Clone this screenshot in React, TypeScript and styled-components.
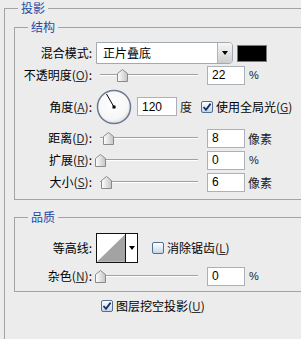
import styled, { createGlobalStyle } from "styled-components";

const GlobalStyle = createGlobalStyle`
  html, body {
    margin: 0;
    padding: 0;
    overflow: hidden;
    background: #ececec;
  }
  body {
    font-family: "Noto Sans CJK SC", "Noto Sans", sans-serif;
    font-size: 12px;
    color: #000;
  }
`;

const Panel = styled.fieldset`
  margin: 1px 0 0 4px;
  padding: 5px 0 0 9px;
  border: 1px solid #a3a3a3;
  border-right: none;
  border-bottom: none;
  min-width: 0;
  box-sizing: border-box;
  height: 338px;
`;

const Section = styled.fieldset<{ $top?: number; $pad: string }>`
  margin: ${(p) => p.$top ?? 0}px 0 0 0;
  padding: ${(p) => p.$pad};
  border: 1px solid #a3a3a3;
  border-right: none;
  min-width: 0;
`;

const Title = styled.legend<{ $indent: number }>`
  margin-left: ${(p) => p.$indent}px;
  padding: 0 3px;
  line-height: 14px;
  color: #1c4aa6;
`;

const Row = styled.div<{ $h: number; $top?: number }>`
  display: flex;
  align-items: center;
  height: ${(p) => p.$h}px;
  margin-top: ${(p) => p.$top ?? 0}px;
  white-space: nowrap;
`;

const Label = styled.span`
  flex: none;
  width: 77px;
  margin-right: 4px;
  text-align: right;
  line-height: 14px;
`;

const Key = styled.span`
  color: #333;
  text-decoration: underline;
`;

const Select = styled.div`
  display: flex;
  width: 137px;
  height: 22px;
  box-sizing: border-box;
  border: 1px solid #a2a9b1;
  border-radius: 0 4px 4px 0;
  background: #fff;
`;

const SelectText = styled.span`
  flex: 1;
  padding-left: 6px;
  line-height: 20px;
`;

const SelectButton = styled.span`
  display: flex;
  align-items: center;
  justify-content: center;
  width: 14px;
  border-left: 1px solid #b4b4b4;
  border-radius: 0 3px 3px 0;
  background: linear-gradient(#f7f7f7, #cdcdcd);
`;

const Arrow = styled.span`
  width: 0;
  height: 0;
  border-left: 3px solid transparent;
  border-right: 3px solid transparent;
  border-top: 4px solid #000;
`;

const Swatch = styled.span`
  width: 30px;
  height: 17px;
  margin-left: 4px;
  box-sizing: border-box;
  border: 1px solid #7a7a7a;
  background: #000;
`;

const SliderBox = styled.div`
  position: relative;
  flex: none;
  width: 104px;
  height: 20px;
  &::before {
    content: "";
    position: absolute;
    left: 4px;
    right: 2px;
    top: 9px;
    height: 0;
    border-top: 1px solid #a0a0a0;
    border-bottom: 1px solid #fff;
  }
`;

const Thumb = styled.svg`
  position: absolute;
  top: 4px;
`;

const NumInput = styled.input<{ $w?: number; $gap?: number }>`
  flex: none;
  width: ${(p) => p.$w ?? 38}px;
  height: 19px;
  margin: 0 0 0 ${(p) => p.$gap ?? 7}px;
  padding: 0 0 0 4px;
  box-sizing: border-box;
  border: 1px solid #abb1b9;
  background: #fff;
  font-family: "Liberation Sans", Arial, sans-serif;
  font-size: 12px;
  color: #000;
  outline: none;
`;

const Unit = styled.span<{ $small?: boolean }>`
  margin-left: ${(p) => (p.$small ? 4 : 3)}px;
  font-family: ${(p) =>
    p.$small ? `"Liberation Sans", Arial, sans-serif` : "inherit"};
  font-size: ${(p) => (p.$small ? 11 : 12)}px;
  color: #222;
`;

const Box = styled.span<{ $gap?: number }>`
  display: flex;
  align-items: center;
  justify-content: center;
  flex: none;
  width: 12px;
  height: 12px;
  margin-left: ${(p) => p.$gap ?? 0}px;
  box-sizing: border-box;
  border: 1px solid #4f6f93;
  border-radius: 2px;
  background: linear-gradient(#ffffff, #c6d6e8);
`;

const BoxText = styled.span`
  margin-left: 3px;
  line-height: 14px;
`;

const Contour = styled.div`
  display: flex;
  width: 42px;
  height: 30px;
  box-sizing: border-box;
  border: 1px solid #111;
  background: #fff;
`;

const ContourArrow = styled.span`
  display: flex;
  align-items: center;
  justify-content: center;
  width: 11px;
  border-left: 1px solid #111;
`;

function Slider({ pos }: { pos: number }) {
  return (
    <SliderBox>
      <Thumb width="11" height="13" viewBox="0 0 11 13" style={{ left: pos - 1 }}>
        <defs>
          <linearGradient id="tg" x1="0" y1="0" x2="1" y2="0">
            <stop offset="0" stopColor="#ffffff" />
            <stop offset="1" stopColor="#c4c4c4" />
          </linearGradient>
        </defs>
        <path
          d="M0.5 4.5 L5.5 0.5 L10.5 4.5 L10.5 12.5 L0.5 12.5 Z"
          fill="url(#tg)"
          stroke="#8a8a8a"
        />
      </Thumb>
    </SliderBox>
  );
}

function Check({ on, gap }: { on?: boolean; gap?: number }) {
  return (
    <Box $gap={gap}>
      {on && (
        <svg width="10" height="10" viewBox="0 0 10 10">
          <path
            d="M1.5 5 L4 7.8 L8.6 1.6"
            fill="none"
            stroke="#15306a"
            strokeWidth="1.8"
          />
        </svg>
      )}
    </Box>
  );
}

function Dial() {
  return (
    <svg width="36" height="36" viewBox="0 0 36 36">
      <defs>
        <radialGradient id="dg" cx="0.45" cy="0.4" r="0.6">
          <stop offset="0" stopColor="#ffffff" />
          <stop offset="0.8" stopColor="#f6f6f6" />
          <stop offset="1" stopColor="#dcdcdc" />
        </radialGradient>
      </defs>
      <circle cx="18" cy="18" r="16.5" fill="url(#dg)" stroke="#6b7891" strokeWidth="1.5" />
      <line x1="18" y1="18" x2="10.5" y2="5" stroke="#000" strokeWidth="1" />
      <rect x="16.5" y="16.5" width="3" height="3" fill="#000" />
    </svg>
  );
}

export default function App() {
  return (
    <>
      <GlobalStyle />
      <Panel>
        <Title $indent={4}>投影</Title>
        <Section $pad="8px 0 7px 0">
          <Title $indent={13}>结构</Title>
          <Row $h={22}>
            <Label>混合模式:</Label>
            <Select>
              <SelectText>正片叠底</SelectText>
              <SelectButton>
                <Arrow />
              </SelectButton>
            </Select>
            <Swatch />
          </Row>
          <Row $h={20} $top={1}>
            <Label>
              不透明度(<Key>O</Key>):
            </Label>
            <Slider pos={22} />
            <NumInput defaultValue="22" />
            <Unit $small>%</Unit>
          </Row>
          <Row $h={35} $top={4}>
            <Label>
              角度(<Key>A</Key>):
            </Label>
            <Dial />
            <NumInput defaultValue="120" $w={40} $gap={5} />
            <Unit>度</Unit>
            <Check on gap={9} />
            <BoxText>
              使用全局光(<Key>G</Key>)
            </BoxText>
          </Row>
          <Row $h={20} $top={4}>
            <Label>
              距离(<Key>D</Key>):
            </Label>
            <Slider pos={8} />
            <NumInput defaultValue="8" />
            <Unit>像素</Unit>
          </Row>
          <Row $h={20} $top={2}>
            <Label>
              扩展(<Key>R</Key>):
            </Label>
            <Slider pos={0} />
            <NumInput defaultValue="0" />
            <Unit $small>%</Unit>
          </Row>
          <Row $h={20} $top={2}>
            <Label>
              大小(<Key>S</Key>):
            </Label>
            <Slider pos={6} />
            <NumInput defaultValue="6" />
            <Unit>像素</Unit>
          </Row>
        </Section>
        <Section $top={10} $pad="8px 0 5px 0">
          <Title $indent={13}>品质</Title>
          <Row $h={31}>
            <Label>等高线:</Label>
            <Contour>
              <svg width="29" height="28" viewBox="0 0 29 28">
                <path d="M0 28 L29 0 L29 28 Z" fill="#a3a3a3" />
              </svg>
              <ContourArrow>
                <Arrow />
              </ContourArrow>
            </Contour>
            <Check gap={14} />
            <BoxText>
              消除锯齿(<Key>L</Key>)
            </BoxText>
          </Row>
          <Row $h={20} $top={3}>
            <Label>
              杂色(<Key>N</Key>):
            </Label>
            <Slider pos={0} />
            <NumInput defaultValue="0" />
            <Unit $small>%</Unit>
          </Row>
        </Section>
        <Row $h={14} $top={7}>
          <Check on gap={87} />
          <BoxText>
            图层挖空投影(<Key>U</Key>)
          </BoxText>
        </Row>
      </Panel>
    </>
  );
}
